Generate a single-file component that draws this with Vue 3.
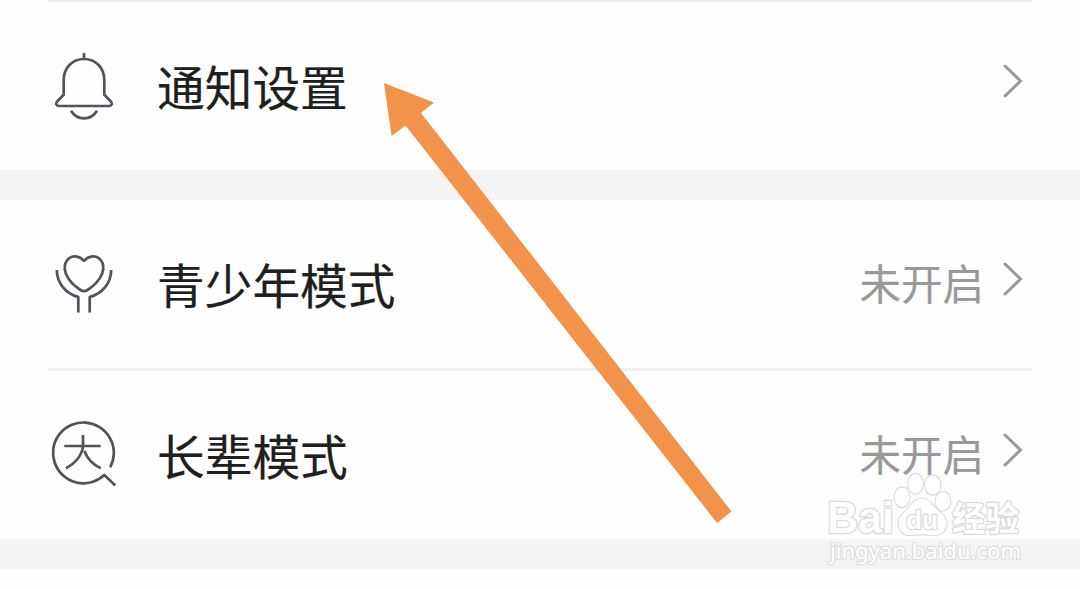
<template>
  <div class="settings-page">
    <section v-for="(group, index) in groups" :key="index" class="group">
      <div v-for="item in group" :key="item.icon" class="row">
        <svg v-if="item.icon === 'bell'" class="row-icon" viewBox="0 0 72 72">
          <path d="M36 3v6" />
          <path d="M36 9C24 9 15.700 18 15.700 30V44.800L9.500 51C7 53.500 8 56 11 56H61C64 56 65 53.500 62.500 51L56.300 44.800V30C56.300 18 48 9 36 9z" />
          <path d="M23 60.800c6 10 20 10 26 0" />
        </svg>
        <svg v-else-if="item.icon === 'heart'" class="row-icon" viewBox="0 0 72 72">
          <path d="M36 12.800C32 8.500 26 7 21.500 10 16.500 13.500 15.500 20 18 26c3 7 9 12.500 14.500 16 2.300 1.500 4.700 1.500 7 0C45 38.500 51 33 54 26c2.500-6 1.500-12.500-3.500-16C46 7 40 8.500 36 12.800z" />
          <path d="M8.800 22C9 35 17.500 45.500 30.300 49V64.500" />
          <path d="M63.200 22C63 35 54.500 45.500 41.700 49V64.500" />
        </svg>
        <svg v-else class="row-icon" viewBox="0 0 72 72">
          <path d="M62.200 48.300A30.400 30.400 0 1 0 56.300 56L67.300 66.500" />
          <path d="M16.300 27h36.400M35 16v11.200c-1 9.500-8.500 17.500-17 22.100M36.300 31.700c3 8 9 14 16.400 17.600" />
        </svg>
        <span class="row-label">{{ item.label }}</span>
        <span class="row-status">{{ item.status }}</span>
        <svg class="row-arrow" viewBox="0 0 22 36"><path d="M3 3l15.500 15L3 33" /></svg>
      </div>
    </section>

    <!-- pointer to the notification row -->
    <svg class="pointer" viewBox="0 0 1080 589">
      <path d="M384 83L434 102.500 421 113 731.500 511.500 717 523 405.500 125.500 391.500 136z" />
    </svg>

    <svg class="watermark" viewBox="0 0 220 120">
      <g class="paw">
        <ellipse cx="82" cy="37.300" rx="7.500" ry="9.800" />
        <ellipse cx="95.500" cy="23.700" rx="7.300" ry="9.800" />
        <ellipse cx="112.700" cy="25" rx="7.700" ry="9.600" />
        <ellipse cx="123" cy="41.300" rx="7.500" ry="9.200" />
        <path d="M102 38.500c-7 0-10 6-14 10.500-5 5-10 8-9.500 15 .5 8 6 11.500 12 11 8-1 14-1 22 0 7 .8 13-3 14-10 .8-7-5-11-10-16-5-4-8-10.500-14.500-10.500z" />
      </g>
      <text class="brand" x="7" y="73" textLength="67" lengthAdjust="spacingAndGlyphs">Bai</text>
      <text class="brand-du" x="86" y="69" textLength="32" lengthAdjust="spacingAndGlyphs">du</text>
      <text class="brand-cn" x="132" y="70.500" textLength="67" lengthAdjust="spacingAndGlyphs">经验</text>
      <text class="site" x="10" y="99" textLength="191" lengthAdjust="spacingAndGlyphs">jingyan.baidu.com</text>
    </svg>
  </div>
</template>

<script setup>
const groups = [
  [{ icon: 'bell', label: '通知设置', status: '' }],
  [
    { icon: 'heart', label: '青少年模式', status: '未开启' },
    { icon: 'elder', label: '长辈模式', status: '未开启' }
  ]
]
</script>

<style>
body { margin: 0; background: #fefefe; overflow: hidden; }
</style>

<style scoped>
.settings-page { position: relative; width: 1080px; height: 589px; overflow: hidden; background: #fefefe; font-family: "Noto Sans CJK SC", sans-serif; }
.group { padding: 0 48px; border-bottom: 30px solid #f4f4f4; }
.row { display: flex; align-items: center; height: 168px; }
.group:first-child .row { border-top: 2px solid #f0f0f0; }
.row + .row { border-top: 3px solid #f0f0f0; }
.row-icon { width: 72px; height: 72px; flex-shrink: 0; fill: none; stroke: #50535a; stroke-width: 2.7; stroke-linejoin: round; }
.row-label { margin-left: 37px; font-size: 47.7px; line-height: 68px; color: #1f1f1f; -webkit-text-stroke: 0.2px #1f1f1f; }
.row-status { margin-left: auto; padding-bottom: 4px; font-size: 41.5px; line-height: 60px; color: #999; -webkit-text-stroke: 0.2px #999; }
.row-arrow { width: 22px; height: 36px; margin: 0 8px 10px 18px; fill: none; stroke: #999; stroke-width: 3; stroke-linecap: round; }
.pointer { position: absolute; left: 0; top: 0; width: 1080px; height: 589px; fill: #f3924a; pointer-events: none; }
.watermark { position: absolute; left: 820px; top: 460px; width: 220px; height: 120px; fill: #fff; stroke: #dadada; stroke-width: 2.6; stroke-linejoin: round; paint-order: stroke; pointer-events: none; }
.paw { stroke-width: 2.2; }
.brand { font: bold 45px "Liberation Sans", sans-serif; }
.brand-du { font: bold 26px "Liberation Sans", sans-serif; }
.brand-cn { font: bold 34px "Noto Sans CJK SC", sans-serif; }
.site { font: 22px "Noto Sans", sans-serif; stroke: #e0e0e0; }
</style>
